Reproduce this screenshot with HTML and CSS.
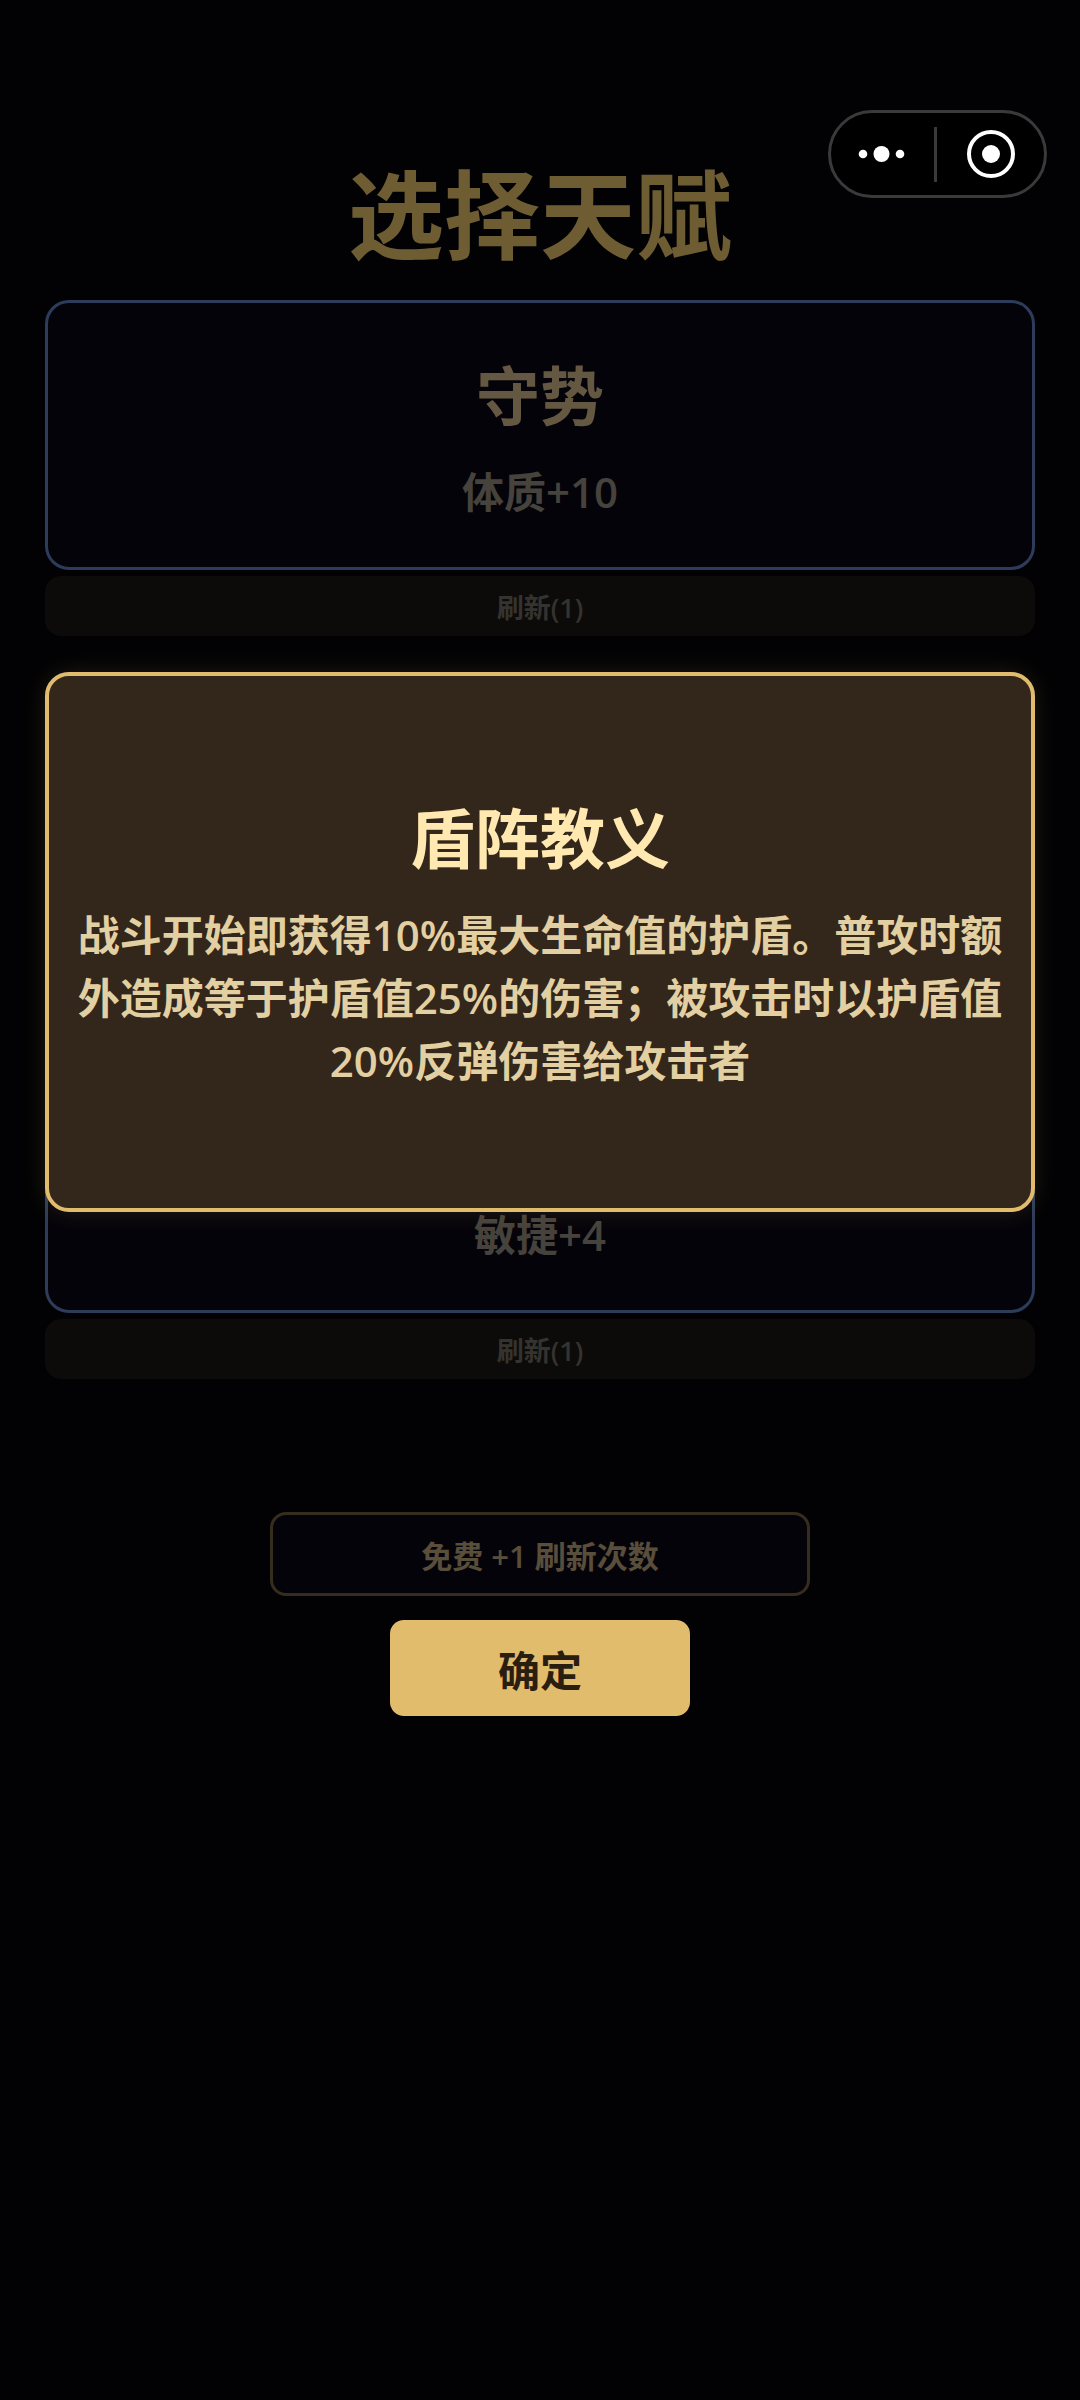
FILE: index.html
```html
<!DOCTYPE html>
<html lang="zh-CN">
<head>
<meta charset="utf-8">
<title>选择天赋</title>
<link rel="stylesheet" href="styles.css">
</head>
<body>
<div class="capsule">
  <svg class="capsule-more" width="80" height="24" viewBox="0 0 80 24"><circle cx="15" cy="12" r="4.3"/><circle cx="33.5" cy="12" r="8"/><circle cx="52" cy="12" r="4.3"/></svg>
  <span class="capsule-line"></span>
  <svg class="capsule-close" width="56" height="56" viewBox="0 0 56 56"><circle class="ring" cx="28" cy="28" r="22"/><circle class="dot" cx="28" cy="28" r="9"/></svg>
</div>
<main class="page">
  <h1 class="title">选择天赋</h1>
  <section class="talents">
    <div class="group">
      <div class="card">
        <div class="card-name">守势</div>
        <div class="card-desc">体质+10</div>
      </div>
      <div class="refresh">刷新(1)</div>
    </div>
    <div class="group">
      <div class="card"></div>
      <div class="refresh"></div>
      <div class="popup">
        <div class="popup-name">盾阵教义</div>
        <div class="popup-desc">战斗开始即获得10%最大生命值的护盾。普攻时额外造成等于护盾值25%的伤害；被攻击时以护盾值20%反弹伤害给攻击者</div>
      </div>
    </div>
    <div class="group">
      <div class="card">
        <div class="card-name card-name-blank"></div>
        <div class="card-desc">敏捷+4</div>
      </div>
      <div class="refresh">刷新(1)</div>
    </div>
  </section>
  <div class="actions">
    <div class="free-btn">免费 +1 刷新次数</div>
    <div class="confirm-btn">确定</div>
  </div>
</main>
<div class="overlay"></div>
</body>
</html>
```
FILE: styles.css
```css
* { box-sizing: border-box; }
html, body { margin: 0; padding: 0; background: #040408; }
body {
  width: 1080px;
  height: 2400px;
  overflow: hidden;
  font-family: "Open Sans", "Noto Sans CJK SC", sans-serif;
  position: relative;
}
.overlay {
  position: absolute;
  inset: 0;
  background: rgba(0, 0, 0, 0.5);
  z-index: 1;
}
.capsule {
  position: absolute;
  top: 110px;
  left: 828px;
  width: 219px;
  height: 88px;
  border: 3px solid #3a3a3a;
  border-radius: 44px;
  z-index: 3;
  background: #000;
  display: flex;
  align-items: center;
}
.capsule-more { fill: #fff; margin-left: 17px; flex: none; }
.capsule-line { width: 3px; height: 55px; background: #3a3a3a; margin-left: 6px; flex: none; }
.capsule-close { margin-left: 26px; flex: none; }
.ring { fill: none; stroke: #fff; stroke-width: 4; }
.dot { fill: #fff; }
.page { padding: 142px 45px 0; }
.title {
  margin: 0 0 14px;
  font-size: 96px;
  line-height: 144px;
  font-weight: 700;
  text-align: center;
  color: #dcb866;
}
.talents { display: flex; flex-direction: column; gap: 35.5px; }
.group { position: relative; display: flex; flex-direction: column; gap: 6px; }
.card {
  height: 270px;
  border: 3px solid #5a78b4;
  border-radius: 24px;
  background: #0a0614;
  display: flex;
  flex-direction: column;
  justify-content: center;
  align-items: center;
  gap: 16px;
}
.card-name {
  font-size: 64px;
  line-height: 96px;
  font-weight: 600;
  color: #c8b084;
}
.card-name-blank { height: 96px; }
.card-desc {
  font-size: 42px;
  line-height: 63px;
  font-weight: 600;
  color: #8c8478;
}
.refresh {
  height: 60px;
  border-radius: 16px;
  background: #181612;
  display: flex;
  align-items: center;
  justify-content: center;
  font-size: 27px;
  font-weight: 600;
  color: #6a665e;
}
.popup {
  position: absolute;
  top: 0;
  left: 0;
  right: 0;
  height: 540px;
  padding: 0 24px 3px;
  border: 4px solid #e0bc6c;
  border-radius: 24px;
  background: #33261a;
  box-shadow: 0 0 24px rgba(224, 188, 108, 0.14);
  z-index: 2;
  display: flex;
  flex-direction: column;
  align-items: center;
  justify-content: center;
  gap: 15px;
  text-align: center;
}
.popup-name {
  font-size: 65px;
  line-height: 99px;
  font-weight: 600;
  color: #ffe9b0;
}
.popup-desc {
  font-size: 42px;
  line-height: 63px;
  font-weight: 600;
  color: #e2cfa2;
}
.actions {
  margin-top: 133px;
  display: flex;
  flex-direction: column;
  align-items: center;
  gap: 24px;
}
.free-btn {
  width: 540px;
  height: 84px;
  border: 3px solid #6e5a3c;
  border-radius: 16px;
  background: #0a0614;
  display: flex;
  align-items: center;
  justify-content: center;
  font-size: 31px;
  font-weight: 600;
  color: #b09c74;
}
.confirm-btn {
  position: relative;
  z-index: 2;
  width: 300px;
  height: 96px;
  border-radius: 14px;
  background: #e0bc6c;
  display: flex;
  align-items: center;
  justify-content: center;
  font-size: 42px;
  font-weight: 700;
  color: #2a1e10;
}
```
